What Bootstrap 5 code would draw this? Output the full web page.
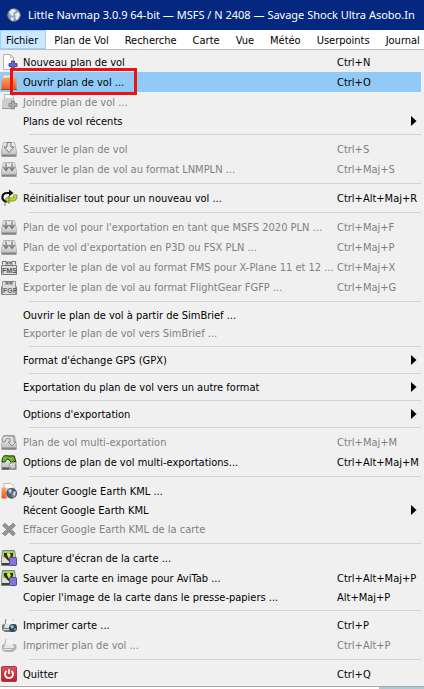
<!DOCTYPE html>
<html lang="fr">
<head>
<meta charset="utf-8">
<meta name="viewport" content="width=device-width, initial-scale=1">
<title>Little Navmap</title>
<link rel="stylesheet" href="https://cdn.jsdelivr.net/npm/bootstrap@5.3.0/dist/css/bootstrap.min.css">
<style>
body{font-family:"DejaVu Sans Condensed","DejaVu Sans",sans-serif;font-size:11px;line-height:18px;color:#000;background:#fff}
.titlebar{height:30px;background:#04277f;color:#fff;font-family:"Noto Sans",sans-serif;font-size:11px;padding-left:7px;gap:7px}
.menubar{height:19px;background:#fff}
.menubar button{border:0;background:none;color:#000;padding:2px 8px 0;line-height:17px}
.menubar button.opened{background:#cce8ff;box-shadow:inset 0 0 0 1px #99d1ff;padding-left:6px}
.filemenu{background:#f0f0f0;border-top:1px solid #bdbdbd;border-bottom:1px solid #a8a8a8;padding:2px 3px 2px 0}
.entry{border:0;background:none;color:#000;padding:0;height:18px;text-align:left}
.entry.tall{height:20px}
.entry:disabled{color:#808080}
.entry.current{background:#91c9f7}
.entry span{padding-top:2px}
.pic{width:18px;height:18px;margin-right:5px}
.keys{width:84px}
.rule{height:1px;margin:4px 0 4px 29px;background:#d2d2d2}
.arrow{width:6px;height:10px;margin-right:4px}
.marker{left:10px;top:-4px;width:127px;height:27px;border:3px solid #ed1018;pointer-events:none}
.below{height:2px}
.below span{width:45px;background:#a9cbd7}
</style>
</head>
<body class="overflow-hidden">
<svg width="0" height="0" class="position-absolute" aria-hidden="true">
<defs>
<linearGradient id="gMetal" x2="0" y2="1"><stop stop-color="#f4f4f4"/><stop offset="1" stop-color="#bbb"/></linearGradient>
<linearGradient id="gOrange" x2="0" y2="1"><stop stop-color="#f9a66c"/><stop offset="1" stop-color="#e8591a"/></linearGradient>
<linearGradient id="gRed" x2="0" y2="1"><stop stop-color="#e0525a"/><stop offset="1" stop-color="#b8222c"/></linearGradient>
<symbol id="new" viewBox="0 0 18 18"><path d="M3.500 1.500h7l3 3v12h-10z" fill="#fcfcfc" stroke="#b4b4b4"/><path d="M10.500 1.500v3h3" fill="none" stroke="#bbb"/><path d="M11.500 8h3v2.500H17v3h-2.500V16h-3v-2.500H9v-3h2.500z" fill="#6268c8" stroke="#34387c" stroke-width=".8"/></symbol>
<symbol id="open" viewBox="0 0 18 18"><path d="M3 6V2h9l2 2v3" fill="#eee" stroke="#bbb"/><path d="M1.500 6.500l3-2h12v12h-15z" fill="url(#gOrange)"/><path d="M1 16.500h16" stroke="#a64a20"/></symbol>
<symbol id="join" viewBox="0 0 18 18"><path d="M4.500 6V1.500h7l2 2V8" fill="#f7f7f7" stroke="#bbb"/><path d="M2 7l2-2h9v10H2z" fill="#ccc"/><path d="M2 15.500h10" stroke="#999"/><path d="M11.500 8h3v2.500H17v3h-2.500V16h-3v-2.500H9v-3h2.500z" fill="#aaa" stroke="#808080" stroke-width=".8"/></symbol>
<symbol id="disk" viewBox="0 0 18 18"><path d="M3.500 2.500h11l2 9v5h-15v-5z" fill="url(#gMetal)" stroke="#b5b5b5"/><path d="M2 15.500h14" stroke="#858585" stroke-width="2"/></symbol>
<symbol id="save" viewBox="0 0 18 18"><use href="#disk"/><path d="M7 2.500h4V7h3l-5 5.500L4 7h3z" fill="#e6e6e6" stroke="#777"/></symbol>
<symbol id="saveas" viewBox="0 0 18 18"><use href="#disk"/><path d="M6 3.500v5M3.500 7L6 10.500 8.500 7M12 3.500v5M9.500 7l2.500 3.500L14.500 7" fill="none" stroke="#777" stroke-width="1.300"/><path d="M5 3h8" stroke="#aaa" stroke-dasharray="2 1"/></symbol>
<symbol id="reset" viewBox="0 0 18 18"><path d="M7 12.500H5.500C1 11 1.500 4 7 4h4" fill="none" stroke="#111" stroke-width="2.200"/><path d="M9 .5L13.500 4 9 7.500z" fill="#111"/><path d="M8 10.500h4.500c2 0 3-1 3-5" fill="none" stroke="#6d8111" stroke-width="4"/><path d="M8 10.500h4.500c2 0 3-1 3-5" fill="none" stroke="#b9d532" stroke-width="2.700"/><path d="M9 7v7.500l-4-4z" fill="#b9d532" stroke="#56660d" stroke-width=".7"/><path d="M5 13.500v3.500" stroke="#777"/></symbol>
<symbol id="fms" viewBox="0 0 18 18"><path d="M2.500 6.500v-3h3M12.500 3.500h3v3M5 3l3 3M13 3l-3 3M5 6h3V3M13 6h-3V3" fill="none" stroke="#777" stroke-width="1.200"/><path d="M1.500 7.500h15v9h-15z" fill="#ddd" stroke="#777"/><text x="2" y="15" font-size="7" font-family="Liberation Sans" font-weight="bold" fill="#555">FMS</text></symbol>
<symbol id="fgf" viewBox="0 0 18 18"><path d="M2.500 7.500v-4h13v13h-13z" fill="#ddd" stroke="#999"/><path d="M5 3l3 3M13 3l-3 3M5 6h3V3M13 6h-3V3" fill="none" stroke="#777" stroke-width="1.200"/><path d="M1.500 8.500v8h15v-8" fill="none" stroke="#888"/><text x="3" y="15" font-size="7" font-family="Liberation Sans" font-weight="bold" fill="#666">FGF</text></symbol>
<symbol id="multi" viewBox="0 0 18 18"><use href="#disk"/><path d="M2 7c0-4 3-5 7-4h5v6h2l-4 4-4-4h2V6C7 5 5 6 6 8l-3 1z" fill="#ddd" stroke="#888"/></symbol>
<symbol id="multiopt" viewBox="0 0 18 18"><use href="#disk"/><path d="M2 9c0-6 3-7 6-6h6l2 6-3-1-1 2-4-4C6 6 6 8 5 9z" fill="#6ebb21" stroke="#24320f"/><circle cx="12.500" cy="12.500" r="3" fill="#eee" stroke="#929292" stroke-width="1.500" stroke-dasharray="2 .7"/><circle cx="12.500" cy="12.500" r="1" fill="#aaa"/><path d="M2 15.500h7" stroke="#555" stroke-width="2"/></symbol>
<symbol id="kml" viewBox="0 0 18 18"><path d="M4 7V1.500h7l3 3V9" fill="#fafafa" stroke="#bbb"/><path d="M1.500 5.500h5v11h-5z" fill="url(#gOrange)"/><path d="M7 6h4v10H7z" fill="#eeb494"/><circle cx="11.700" cy="11.300" r="5" fill="#3f6280" stroke="#293d51" stroke-width=".6"/><path d="M8 8l3-1 1 2-2 3zM12 13l2-4 2 1-1 4-2 1z" fill="#bed0d8"/><path d="M11 12l3 1-2 3z" fill="#bf642b"/></symbol>
<symbol id="cross" viewBox="0 0 18 18"><path d="M5 3l4 4 4-4 2.500 2.500-4 4 4 4L13 16l-4-4-4 4-2.500-2.500 4-4-4-4z" fill="#949494" stroke="#858585" stroke-width=".7"/></symbol>
<symbol id="shot" viewBox="0 0 18 18"><path d="M2.500 1.500h12l1.500 9v6H1.500v-6z" fill="#dedede" stroke="#7e857c"/><path d="M3 2h11v7H3z" fill="#a8cd62"/><path d="M4 7V4h3v2h3V4h3v3l-4.500 5z" fill="#263213"/><path d="M7 6l2-2 2 2-2 4z" fill="#d7eb44"/><path d="M2 15h7" stroke="#3d403d" stroke-width="2"/><rect x="9.500" y="8.500" width="7" height="8" rx="1" fill="#8376d4" stroke="#5147a0"/></symbol>
<symbol id="printer" viewBox="0 0 18 18"><path d="M5 9l1-6M12 8l1.500-5" fill="none" stroke="#777"/><path d="M6.500 3.500l-.5 5h7l1-5" fill="#f2f2f2"/><path d="M2 9l2-1h11l1.500 1v4l-4 3H5l-3-2z" fill="#777"/><path d="M5 8h8l1 4H4z" fill="#e2e2e2"/><path d="M3 13.500h8" stroke="#ddd"/></symbol>
<symbol id="print" viewBox="0 0 18 18"><use href="#printer"/><circle cx="13" cy="12" r="4" fill="#29465f"/><path d="M10 10l3-1 1 2-2 2zM14 13l2-1-1 3z" fill="#a7c2d2"/></symbol>
<symbol id="quit" viewBox="0 0 18 18"><rect x="1.500" y="1.500" width="15" height="15" rx="1" fill="url(#gRed)" stroke="#aa3a40"/><path d="M6.500 6a4 4 0 1 0 5 0M9 4v5" fill="none" stroke="#fff" stroke-width="1.700"/></symbol>
<symbol id="arr" viewBox="0 0 6 10"><path d="M0 0l5.500 5L0 10z"/></symbol>
</defs>
</svg>
<header class="titlebar d-flex align-items-center text-nowrap overflow-hidden">
<svg class="flex-shrink-0" width="14" height="14" viewBox="0 0 14 14" aria-hidden="true"><circle cx="7" cy="7" r="6.300" fill="#91a3b6" stroke="#64758e"/><path d="M2 4l3-3 4 1-1 2-2 1 1 2-2 1-2-2zM8 6l3-2 2 3-2 4-2 1zM4 9l3 1-1 3-2-1z" fill="#e8edf0"/></svg>
<span>Little Navmap 3.0.9 64-bit — MSFS / N 2408 — Savage Shock Ultra Asobo.In</span>
</header>
<nav class="menubar d-flex text-nowrap overflow-hidden" aria-label="Menu principal">
<button class="opened" type="button">Fichier</button><button type="button">Plan de Vol</button><button type="button">Recherche</button><button type="button">Carte</button><button type="button">Vue</button><button type="button">Météo</button><button type="button">Userpoints</button><button type="button">Journal</button>
</nav>
<main class="filemenu d-flex flex-column text-nowrap">
<button class="entry tall d-flex align-items-center" type="button"><svg class="pic"><use href="#new"/></svg><span class="flex-grow-1">Nouveau plan de vol</span><span class="keys">Ctrl+N</span></button>
<button class="entry tall current position-relative d-flex align-items-center" type="button"><svg class="pic"><use href="#open"/></svg><span class="flex-grow-1">Ouvrir plan de vol ...</span><span class="keys">Ctrl+O</span><span class="marker position-absolute"></span></button>
<button class="entry tall d-flex align-items-center" type="button" disabled><svg class="pic"><use href="#join"/></svg><span>Joindre plan de vol ...</span></button>
<button class="entry d-flex align-items-center" type="button"><span class="pic"></span><span class="flex-grow-1">Plans de vol récents</span><svg class="arrow"><use href="#arr"/></svg></button>
<div class="rule"></div>
<button class="entry tall d-flex align-items-center" type="button" disabled><svg class="pic"><use href="#save"/></svg><span class="flex-grow-1">Sauver le plan de vol</span><span class="keys">Ctrl+S</span></button>
<button class="entry tall d-flex align-items-center" type="button" disabled><svg class="pic"><use href="#saveas"/></svg><span class="flex-grow-1">Sauver le plan de vol au format LNMPLN ...</span><span class="keys">Ctrl+Maj+S</span></button>
<div class="rule"></div>
<button class="entry tall d-flex align-items-center" type="button"><svg class="pic"><use href="#reset"/></svg><span class="flex-grow-1">Réinitialiser tout pour un nouveau vol ...</span><span class="keys">Ctrl+Alt+Maj+R</span></button>
<div class="rule"></div>
<button class="entry tall d-flex align-items-center" type="button" disabled><svg class="pic"><use href="#saveas"/></svg><span class="flex-grow-1">Plan de vol pour l'exportation en tant que MSFS 2020 PLN ...</span><span class="keys">Ctrl+Maj+F</span></button>
<button class="entry tall d-flex align-items-center" type="button" disabled><svg class="pic"><use href="#saveas"/></svg><span class="flex-grow-1">Plan de vol d'exportation en P3D ou FSX PLN ...</span><span class="keys">Ctrl+Maj+P</span></button>
<button class="entry tall d-flex align-items-center" type="button" disabled><svg class="pic"><use href="#fms"/></svg><span class="flex-grow-1">Exporter le plan de vol au format FMS pour X-Plane 11 et 12 ...</span><span class="keys">Ctrl+Maj+X</span></button>
<button class="entry tall d-flex align-items-center" type="button" disabled><svg class="pic"><use href="#fgf"/></svg><span class="flex-grow-1">Exporter le plan de vol au format FlightGear FGFP ...</span><span class="keys">Ctrl+Maj+G</span></button>
<div class="rule"></div>
<button class="entry d-flex align-items-center" type="button"><span class="pic"></span><span>Ouvrir le plan de vol à partir de SimBrief ...</span></button>
<button class="entry d-flex align-items-center" type="button" disabled><span class="pic"></span><span>Exporter le plan de vol vers SimBrief ...</span></button>
<div class="rule"></div>
<button class="entry d-flex align-items-center" type="button"><span class="pic"></span><span class="flex-grow-1">Format d'échange GPS (GPX)</span><svg class="arrow"><use href="#arr"/></svg></button>
<div class="rule"></div>
<button class="entry d-flex align-items-center" type="button"><span class="pic"></span><span class="flex-grow-1">Exportation du plan de vol vers un autre format</span><svg class="arrow"><use href="#arr"/></svg></button>
<div class="rule"></div>
<button class="entry d-flex align-items-center" type="button"><span class="pic"></span><span class="flex-grow-1">Options d'exportation</span><svg class="arrow"><use href="#arr"/></svg></button>
<div class="rule"></div>
<button class="entry tall d-flex align-items-center" type="button" disabled><svg class="pic"><use href="#multi"/></svg><span class="flex-grow-1">Plan de vol multi-exportation</span><span class="keys">Ctrl+Maj+M</span></button>
<button class="entry tall d-flex align-items-center" type="button"><svg class="pic"><use href="#multiopt"/></svg><span class="flex-grow-1">Options de plan de vol multi-exportations...</span><span class="keys">Ctrl+Alt+Maj+M</span></button>
<div class="rule"></div>
<button class="entry tall d-flex align-items-center" type="button"><svg class="pic"><use href="#kml"/></svg><span>Ajouter Google Earth KML ...</span></button>
<button class="entry d-flex align-items-center" type="button"><span class="pic"></span><span class="flex-grow-1">Récent Google Earth KML</span><svg class="arrow"><use href="#arr"/></svg></button>
<button class="entry tall d-flex align-items-center" type="button" disabled><svg class="pic"><use href="#cross"/></svg><span>Effacer Google Earth KML de la carte</span></button>
<div class="rule"></div>
<button class="entry tall d-flex align-items-center" type="button"><svg class="pic"><use href="#shot"/></svg><span>Capture d'écran de la carte ...</span></button>
<button class="entry tall d-flex align-items-center" type="button"><svg class="pic"><use href="#shot"/></svg><span class="flex-grow-1">Sauver la carte en image pour AviTab ...</span><span class="keys">Ctrl+Alt+Maj+P</span></button>
<button class="entry d-flex align-items-center" type="button"><span class="pic"></span><span class="flex-grow-1">Copier l'image de la carte dans le presse-papiers ...</span><span class="keys">Alt+Maj+P</span></button>
<div class="rule"></div>
<button class="entry tall d-flex align-items-center" type="button"><svg class="pic"><use href="#print"/></svg><span class="flex-grow-1">Imprimer carte ...</span><span class="keys">Ctrl+P</span></button>
<button class="entry tall d-flex align-items-center" type="button" disabled><svg class="pic opacity-50"><use href="#printer"/></svg><span class="flex-grow-1">Imprimer plan de vol ...</span><span class="keys">Ctrl+Alt+P</span></button>
<div class="rule"></div>
<button class="entry tall d-flex align-items-center" type="button"><svg class="pic"><use href="#quit"/></svg><span class="flex-grow-1">Quitter</span><span class="keys">Ctrl+Q</span></button>
</main>
<div class="below d-flex justify-content-end"><span></span></div>
<script src="https://cdn.jsdelivr.net/npm/bootstrap@5.3.0/dist/js/bootstrap.bundle.min.js"></script>
</body>
</html>
